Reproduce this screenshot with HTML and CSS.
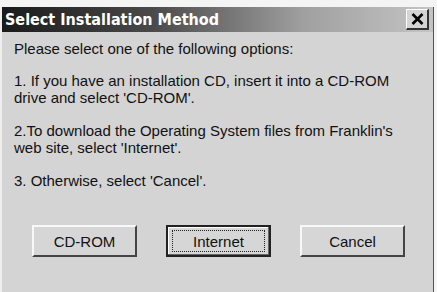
FILE: index.html
```html
<!DOCTYPE html>
<html>
<head>
<meta charset="utf-8">
<link rel="stylesheet" href="styles.css">
</head>
<body>
<div class="window">
  <div class="titlebar">
    <span class="title">Select Installation Method</span>
    <span class="close">
      <svg width="13" height="12" viewBox="0 0 13 12"><path d="M1.5 1 L11.5 11 M11.5 1 L1.5 11" stroke="#000" stroke-width="2.6"/></svg>
    </span>
  </div>
  <div class="content">
    <p class="intro">Please select one of the following options:</p>
    <p>1. If you have an installation CD, insert it into a CD-ROM<br>drive and select 'CD-ROM'.</p>
    <p>2.To download the Operating System files from Franklin's<br>web site, select 'Internet'.</p>
    <p>3. Otherwise, select 'Cancel'.</p>
    <div class="buttons">
      <button class="btn">CD-ROM</button>
      <button class="btn default"><span class="focus">Internet</span></button>
      <button class="btn">Cancel</button>
    </div>
  </div>
</div>
</body>
</html>
```
FILE: styles.css
```css
html, body {
  margin: 0;
  padding: 0;
  background: #f4f4f4;
}
body {
  width: 437px;
  height: 292px;
  overflow: hidden;
  font-family: "Liberation Sans", Arial, sans-serif;
}
.window {
  margin-top: 7px;
  height: 285px;
  width: 434px;
  background: #d4d4d4;
  border-left: 2px solid #efefef;
  border-right: 1px solid #555;
  box-sizing: border-box;
}
.titlebar {
  height: 25px;
  display: flex;
  align-items: center;
  justify-content: space-between;
  background: linear-gradient(to right, #1a1a1a 0%, #4a4a4a 35%, #a0a0a0 70%, #c4c4c4 100%);
  padding: 0 4px 0 3px;
}
.title {
  color: #fff;
  font-family: "DejaVu Sans Condensed", "DejaVu Sans", sans-serif;
  font-weight: bold;
  font-size: 16px;
}
.close {
  width: 23px;
  height: 21px;
  box-sizing: border-box;
  background: #d4d4d4;
  border-top: 1px solid #fff;
  border-left: 1px solid #fff;
  border-right: 2px solid #333;
  border-bottom: 2px solid #333;
  display: flex;
  align-items: center;
  justify-content: center;
}
.content {
  padding: 8px 0 0 12px;
  color: #111;
  font-size: 15px;
  line-height: 17px;
}
.content p {
  margin: 0 0 16px 0;
}
.content p.intro {
  margin-bottom: 15px;
}
.buttons {
  display: flex;
  gap: 29px;
  padding-left: 18px;
  margin-top: 36px;
}
.btn {
  width: 105px;
  height: 32px;
  font-family: "Liberation Sans", Arial, sans-serif;
  font-size: 15px;
  color: #111;
  background: #d6d6d6;
  border-top: 2px solid #f8f8f8;
  border-left: 2px solid #f8f8f8;
  border-right: 2px solid #444;
  border-bottom: 2px solid #444;
  padding: 0;
  display: flex;
  align-items: center;
  justify-content: center;
}
.btn.default {
  border: 2px solid #222;
  box-shadow: inset -1px -1px 0 #666, inset 1px 1px 0 #fff;
}
.focus {
  display: flex;
  align-items: center;
  justify-content: center;
  width: 91px;
  height: 20px;
  border: 1px dotted #222;
}
```
